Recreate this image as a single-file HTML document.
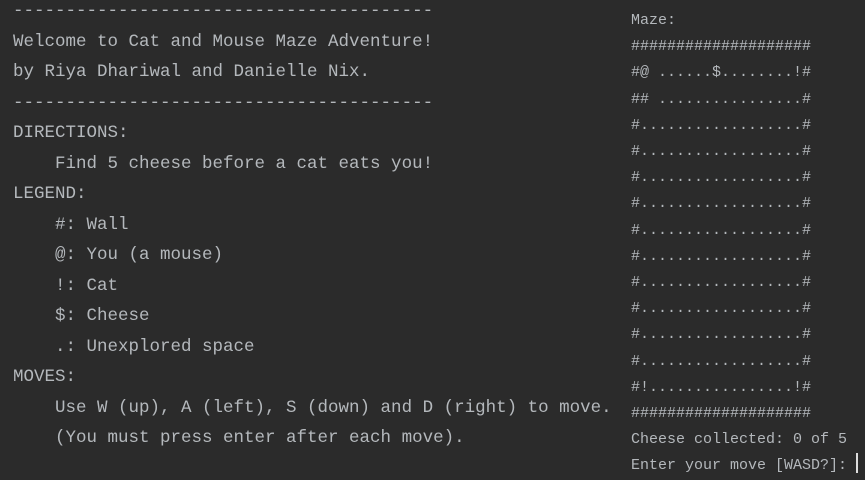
<!DOCTYPE html>
<html><head><style>
body{margin:0;width:865px;height:477px;background:#2b2b2b;overflow:hidden;position:relative;color:#b4b8bc;}
pre{margin:0;position:absolute;white-space:pre;font-family:"Liberation Mono",monospace;}
#l{left:13px;top:-4px;font-size:17.5px;line-height:30.5px;}
#r{left:631px;top:8px;font-size:15px;line-height:26.2px;}
.c{display:inline-block;width:2px;height:20px;background:#ddd;vertical-align:-4px;}
</style></head><body>
<pre id="l">----------------------------------------
Welcome to Cat and Mouse Maze Adventure!
by Riya Dhariwal and Danielle Nix.
----------------------------------------
DIRECTIONS:
    Find 5 cheese before a cat eats you!
LEGEND:
    #: Wall
    @: You (a mouse)
    !: Cat
    $: Cheese
    .: Unexplored space
MOVES:
    Use W (up), A (left), S (down) and D (right) to move.
    (You must press enter after each move).</pre>
<pre id="r">Maze:
####################
#@ ......$........!#
## ................#
#..................#
#..................#
#..................#
#..................#
#..................#
#..................#
#..................#
#..................#
#..................#
#..................#
#!................!#
####################
Cheese collected: 0 of 5
Enter your move [WASD?]: <span class="c"></span></pre>
</body></html>
